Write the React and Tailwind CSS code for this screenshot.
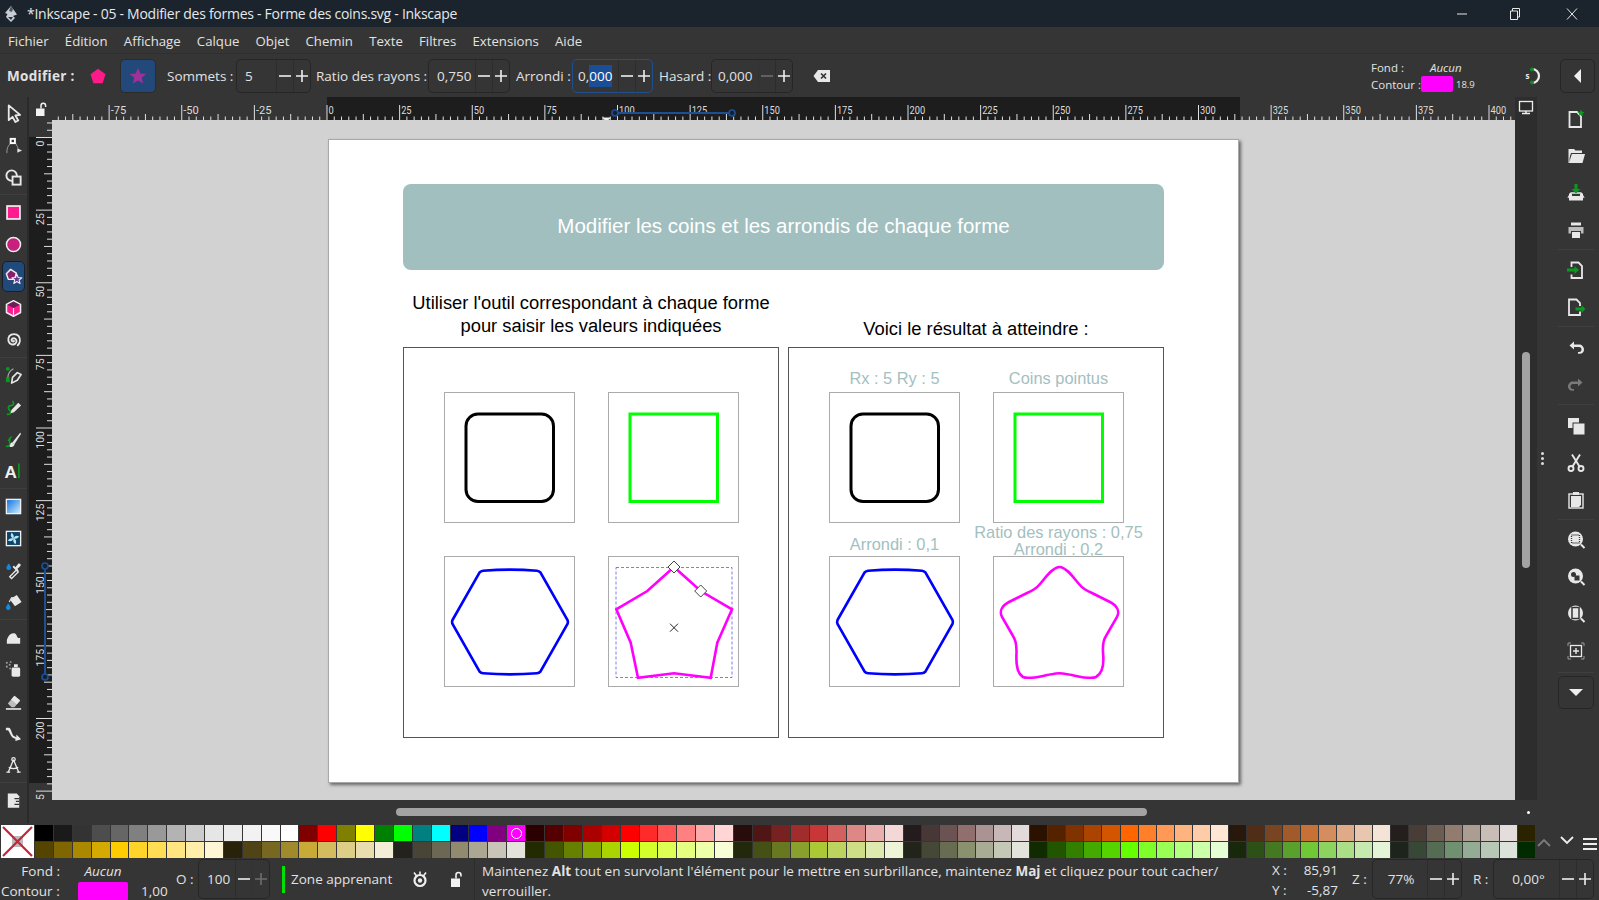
import React from "react";

const W = "#e8e8e8";
const G = "#0a9a20";

const Ic = ({ s = 20, children, className = "" }) => (
  <svg width={s} height={s} viewBox="0 0 20 20" className={className}>{children}</svg>
);

const leftIcons = {
  select: <path d="M5 1.500V17l4-3.500 3 5.500 3-1.600-3-5.300 5-.6Z" fill="#353535" stroke={W} strokeWidth="1.900" strokeLinejoin="round" />,
  node: <g><path d="M3 18C3 13 4 10 7 8" fill="none" stroke="#9a9a9a" strokeWidth="1" /><path d="M12 7L15 13" stroke="#9a9a9a" strokeWidth="1" /><rect x="6" y="2" width="6.500" height="6.500" fill="#fff" /><rect x="8" y="4" width="2.500" height="2.500" fill="#333" /><path d="M14 13l5 2.300-5 2.200Z" fill="#ddd" /></g>,
  shape: <g fill="none" stroke={W} strokeWidth="2"><circle cx="8" cy="8" r="5.500" /><rect x="9" y="9" width="8.500" height="8.500" fill="#353535" /></g>,
  rect: <rect x="3.200" y="3.200" width="13.600" height="13.600" fill="#ff1a90" stroke="#efefef" strokeWidth="1.800" />,
  circle: <circle cx="10" cy="10" r="7.400" fill="#c8207c" stroke="#efefef" strokeWidth="1.600" />,
  star: <g><path d="M7 2.500l6 4-2 6.500H4.500L2.500 7Z" fill="#8c1d6b" stroke="#efefef" strokeWidth="1.500" strokeLinejoin="round" /><path d="M13.500 7.500l1.500 3.500 3.800.3-2.900 2.400 1 3.600-3.400-2-3.200 2 .9-3.600-2.900-2.400 3.800-.3Z" fill="#6a3a95" stroke="#efefef" strokeWidth="1.100" strokeLinejoin="round" /></g>,
  box: <g strokeLinejoin="round"><path d="M10 1.800l7.400 4v8.400L10 18.200l-7.400-4V5.800Z" fill="#ff1a90" stroke="#efefef" strokeWidth="1.600" /><path d="M10 2.500l6.600 3.500L10 9.500 3.400 6Z" fill="#6b1f55" /><path d="M10 9.500v8" stroke="#efefef" strokeWidth="1.200" /></g>,
  spiral: <path d="M10.500 10.500a1.500 1.500 0 0 1-2.500-1.500c.8-2 4-2 5 .5 1 3-2 5.500-5 4.500-3.500-1-4.500-5.500-2.500-8.500 2.500-3 7.500-3 10 0 2 3 1.500 7-1 9.500" fill="none" stroke={W} strokeWidth="2" strokeLinecap="round" />,
  pen: <g><path d="M4 13C4 9 6 5 10 3" fill="none" stroke="#aaa" strokeWidth="1.200" /><circle cx="4" cy="3" r="2" fill={G} /><rect x="2" y="12" width="4" height="5" fill={G} /><path d="M8 18l1-6 5-5 4 2-4 6Z" fill="#353535" stroke={W} strokeWidth="1.700" strokeLinejoin="round" /></g>,
  pencil: <g><path d="M3 17c4 1 5-2 3-4s-2-5 1-5 4-2 2-5" fill="none" stroke={G} strokeWidth="1.800" /><path d="M7 16l.8-3.500L15 5l3 2.800-7.500 7.300Z" fill={W} /></g>,
  callig: <g><path d="M2 17c3 1 5-1 4-4s0-5 2-6" fill="none" stroke={G} strokeWidth="1.800" /><path d="M4 11l3-1" stroke={G} strokeWidth="1.600" /><path d="M9 13L17 3l1 1-7 11Z" fill={W} /><path d="M6 18c0-3 1.500-5 3-5l2 2c0 2-2 3-5 3Z" fill={W} /></g>,
  text: <g><text x="0.500" y="16.500" fontFamily="Liberation Sans" fontWeight="700" fontSize="18" fill="#f0f0f0">A</text><rect x="14.800" y="1.500" width="1.700" height="15.500" fill={G} /></g>,
  grad: <g><defs><linearGradient id="gr1" x1="0" y1="0" x2="1" y2="1"><stop offset="0" stopColor="#0a6fe0" /><stop offset="1" stopColor="#d4f0ff" /></linearGradient></defs><rect x="2.500" y="2.500" width="15" height="15" fill="url(#gr1)" stroke="#f0f0f0" strokeWidth="1.400" /></g>,
  mesh: <g><rect x="2.500" y="2.500" width="15" height="15" fill="#0f4468" stroke="#f0f0f0" strokeWidth="1.400" /><path d="M10 10C7 9 6.500 6.500 8 4c1.500 1 3 3 2 6ZM10 10c3 1 3.500 3.500 2 6-1.500-1-3-3-2-6ZM10 10c1-3 3.500-3.500 6-2-1 1.500-3 3-6 2ZM10 10c-1 3-3.500 3.500-6 2 1-1.500 3-3 6-2Z" fill="#b5e6f7" /></g>,
  dropper: <g><path d="M5 2.500c1.500 2 2.500 3.300 2.500 4.500a2.500 2.500 0 0 1-5 0C2.500 5.800 3.500 4.500 5 2.500Z" fill="#1289dd" /><path d="M8 18.500l-2-2 7-7 2 2Z" fill="none" stroke={W} strokeWidth="1.400" /><path d="M12 6.500l3-3.500c1.500-1 3.300 .8 2.300 2.300l-3.300 3 1.500 1.500-1.500 1.500-5-5 1.500-1.500Z" fill={W} /></g>,
  bucket: <g><path d="M4.500 11c1.500 2 2.500 3.300 2.500 4.500a2.500 2.500 0 0 1-5 0C2 14.300 3 13 4.500 11Z" fill="#1289dd" /><path d="M8 5.500L13.500 2l5 7.500-7 4.500L7 8Z" fill={W} /><path d="M5.500 9.500L8 5l6 1" fill="none" stroke={W} strokeWidth="1.200" /></g>,
  tweak: <path d="M3 16.500V13c1-5 5-9 9-7 1.500 1 1.500 4 3 4.500 1 .3 1.500 0 2-.5v6.500Z" fill={W} />,
  spray: <g><rect x="8" y="8" width="9" height="9.500" rx="1.500" fill={W} /><rect x="10.500" y="4.500" width="4" height="3" fill={W} /><g fill="#999"><circle cx="3" cy="3" r="1.100" /><circle cx="6" cy="5" r="1.100" /><circle cx="3" cy="7" r="1.100" /><circle cx="6.500" cy="9" r="1" /><circle cx="7" cy="2" r="1" /></g></g>,
  eraser: <g><path d="M4 12l7-8 6 5-6 7H8Z" fill="#bdbdbd" /><path d="M11 4l6 5-3.500 4-6-5Z" fill={W} /><rect x="2" y="17" width="16" height="1.700" fill={W} /></g>,
  conn: <path d="M2 4h3c3 0 3 8 6 9l2 1v-3l5 5-6 2v-2.500c-5-.5-6-8-8-9H2Z" fill={W} />,
  lpe: <g fill="none" stroke={W} strokeWidth="1.400"><path d="M10 4L4.500 17M10 4l5.500 13M5 12c3 1.500 7 1.500 10 0" /><circle cx="10" cy="3.500" r="1.800" /><path d="M2.500 17h4M13.500 17h4" /></g>,
  doc: <g><path d="M4 2.500h9.500l2.500 3v12H4Z" fill={W} /><path d="M16 8h-5M16 11h-3.500M16 14h-5" stroke="#353535" strokeWidth="1.300" /></g>,
};

const rightIcons = {
  new: <g><path d="M3.500 3H11l4 4.500V18H3.500Z" fill="#353535" stroke={W} strokeWidth="1.800" /><path d="M15 .5l1 2.300 2.500.2-1.900 1.700.6 2.400-2.200-1.300-2.200 1.300.6-2.400L11.500 3l2.500-.2Z" fill={G} /></g>,
  open: <g fill={W}><path d="M3 3h5l1.500 1.500H16V7H5L3 13Z" /><path d="M5.800 8H19l-2.500 9H3Z" /><path d="M3 3v14" stroke={W} /></g>,
  save: <g><path d="M3 10.500h3v2.500h8v-2.500h3V17.500H3Z" fill={W} /><path d="M5 10h10l2.500 4h-15Z" fill="none" stroke={W} strokeWidth="1.300" /><path d="M8.500 1h3V6H14.500l-4.500 4.500L5.500 6h3Z" fill={G} /></g>,
  print: <g fill={W}><path d="M5 2.500h10v3H5Z" /><path d="M2.500 7h15v6.500H15V11H5v2.500H2.500Z" fill="#bdbdbd" /><rect x="6" y="12" width="8" height="6" /></g>,
  imp: <g><path d="M5.500 7V2.500h7L16 6v12H5.500v-3.500" fill="none" stroke={W} strokeWidth="1.800" /><path d="M1 8.500h7.500V6l4.500 4-4.500 4v-2.500H1Z" fill={G} /></g>,
  exp: <g><path d="M14 9V6l-3.500-3.500H3V18H14v-3.500" fill="none" stroke={W} strokeWidth="1.800" /><path d="M9.500 10.500H15.500V8l4 4-4 4v-2.500h-6Z" fill={G} /></g>,
  undo: <path d="M8 4.500L3.500 8.500 8 12.500V10h5c2 0 2.500 1.500 2.500 2.500S15 15 13 15h-1v1.800h1.500c3 0 4.500-2 4.500-4.300S16 7.500 13.500 7.500H8Z" fill={W} />,
  redo: <path d="M12 4.500l4.500 4-4.500 4V10H7c-2 0-2.500 1.500-2.500 2.500S5 15 7 15h1v1.800H6.500c-3 0-4.500-2-4.500-4.300S4 7.500 6.500 7.500H12Z" fill="#7a7a7a" />,
  copy: <g fill={W}><rect x="2" y="2" width="11" height="10" /><rect x="6.500" y="6.500" width="11.500" height="11.500" fill="#353535" /><rect x="7.500" y="7.500" width="11" height="11" /></g>,
  cut: <g fill="none" stroke={W} strokeWidth="1.900"><circle cx="5" cy="15.500" r="2.500" /><circle cx="15" cy="15.500" r="2.500" /><path d="M6.500 13.500L14 1.500M13.500 13.500L6 1.500" /></g>,
  paste: <g><rect x="3" y="4" width="14" height="14" fill="none" stroke={W} strokeWidth="1.400" /><rect x="7" y="2" width="6" height="3" fill={W} /><path d="M5 6h10v9l-2 2H5Z" fill={W} /></g>,
  zsel: <g><circle cx="9.500" cy="9" r="7.500" fill={W} /><rect x="5.500" y="5" width="8" height="8" fill="none" stroke="#353535" strokeWidth="1.300" strokeDasharray="1 1" /><path d="M15 14.500l3.500 3.500" stroke={W} strokeWidth="2" /></g>,
  zdraw: <g><circle cx="9.500" cy="9" r="7.500" fill={W} /><circle cx="7.500" cy="7.500" r="2.500" fill="#353535" /><rect x="8.500" y="8.500" width="5" height="5" fill="#353535" /><path d="M15 14.500l3.500 3.500" stroke={W} strokeWidth="2" /></g>,
  zpage: <g><circle cx="9.500" cy="9" r="7.500" fill={W} /><rect x="6" y="3.500" width="7" height="11" fill={W} stroke="#353535" strokeWidth="1.500" /><path d="M15 14.500l3.500 3.500" stroke={W} strokeWidth="2" /></g>,
  center: <g><rect x="4.500" y="4.500" width="11" height="11" fill="none" stroke={W} strokeWidth="1.300" /><path d="M10 7v6M7 10h6" stroke={W} strokeWidth="1.400" /><path d="M2 5V2h3M15 2h3v3M18 15v3h-3M5 18H2v-3" fill="none" stroke="#999" strokeWidth="1" /></g>,
};

const LBtn = ({ name, active }) => (
  <div className="h-[32px] flex items-center justify-center">
    <div className={active ? "w-[23px] h-[31px] rounded-[5px] bg-[#21497a] border border-[#16202c] flex items-center justify-center" : "flex items-center justify-center"}>
      <Ic s={19}>{leftIcons[name]}</Ic>
    </div>
  </div>
);
const Sep = ({ className = "h-[3px]" }) => <div className={className + " flex items-center"}><div className="h-px w-full bg-[#3f3f3f]" /></div>;

const RBtn = ({ name }) => (
  <div className="h-[37px] flex items-center justify-center">
    <Ic s={20}>{rightIcons[name]}</Ic>
  </div>
);

const Spin = ({ value, w, dim, dimPlus, focus, tw = "text-left pl-2", sel, className = "" }) => (
  <div className={"flex h-[34px] shrink-0 rounded-[5px] border " + (focus ? "border-[#1f4f8f] " : "border-[#262626] ") + className} style={{ width: w }}>
    <div className="flex-1 flex items-center pt-[1px]">
      <span className={"w-full " + tw}>
        {sel ? <>0,<span className="bg-[#1a4f97] text-white py-[2px]">000</span></> : value}
      </span>
    </div>
    <div className={"w-[17px] flex items-center justify-center border-l border-[#2d2d2d] " + (dim ? "opacity-30" : "")}><svg width="14" height="14" viewBox="0 0 14 14"><path d="M1 7h12" stroke="#eee" strokeWidth="1.600" /></svg></div>
    <div className={"w-[17px] flex items-center justify-center border-l border-[#2d2d2d] " + (dimPlus ? "opacity-30" : "")}><svg width="14" height="14" viewBox="0 0 14 14"><path d="M1 7h12M7 1v12" stroke="#eee" strokeWidth="1.600" /></svg></div>
  </div>
);

function HRuler() {
  const items = [];
  const x0 = 274;
  for (let i = -38; i <= 165; i++) {
    const u = i * 2.5;
    const x = x0 + u * 2.905;
    if (x < 0 || x > 1462) continue;
    const major = i % 10 === 0;
    const med = i % 5 === 0;
    items.push(<line key={i} x1={x} x2={x} y1={major ? 8 : med ? 17 : 19.500} y2={23} stroke="#e0e0e0" strokeWidth="1" />);
    if (major) items.push(<text key={"t" + i} x={x + 1.500} y={16.500} fontSize="10.500" fill="#dcdcdc" fontFamily="Roboto" textLength={String(u).length * 5.200} lengthAdjust="spacingAndGlyphs">{u}</text>);
  }
  return (
    <svg width="1462" height="23" className="block">
      <rect x="0" y="0" width="1462" height="23" fill="#353535" />
      <rect x="274" y="0" width="913" height="23" fill="#1d1d1d" />
      {items}
      <path d="M549 20.500h9l-4.500 4.500Z" fill="#eee" />
      <path d="M562 16H679" stroke="#1d4f93" strokeWidth="2" />
      <circle cx="562" cy="16" r="3" fill="#16202c" stroke="#1d4f93" strokeWidth="1.700" />
      <circle cx="679" cy="16" r="3" fill="#16202c" stroke="#1d4f93" strokeWidth="1.700" />
    </svg>
  );
}

function VRuler() {
  const items = [];
  const y0 = 17.500;
  for (let i = -6; i <= 90; i++) {
    const u = i * 2.5;
    const y = y0 + u * 2.905;
    if (y < 0 || y > 680) continue;
    const major = i % 10 === 0;
    const med = i % 5 === 0;
    items.push(<line key={i} y1={y} y2={y} x1={major ? 7 : med ? 15 : 18} x2={23} stroke="#e0e0e0" strokeWidth="1" />);
    if (major) items.push(<text key={"t" + i} transform={`translate(15 ${y + 3}) rotate(-90)`} textAnchor="end" fontSize="10.500" fill="#dcdcdc" fontFamily="Roboto">{u}</text>);
  }
  return (
    <svg width="23" height="680" className="block shrink-0">
      <rect width="23" height="680" fill="#353535" />
      <rect y="17" width="23" height="646" fill="#1d1d1d" />
      {items}
      <path d="M16 446V557" stroke="#1d4f93" strokeWidth="2" />
      <circle cx="16" cy="446" r="3" fill="#16202c" stroke="#1d4f93" strokeWidth="1.700" />
      <circle cx="16" cy="557" r="3" fill="#16202c" stroke="#1d4f93" strokeWidth="1.700" />
    </svg>
  );
}

const Square = ({ children, label }) => (
  <div className="relative w-[131px] h-[131px] border border-[#ababab]">
    {label}
    <svg width="130" height="130" viewBox="0 0 130 130" className="block absolute left-0 top-0 overflow-visible">{children}</svg>
  </div>
);

const RR = <rect x="21" y="21" width="87.500" height="87.500" rx="12" fill="none" stroke="#000" strokeWidth="3" />;
const GR = <rect x="21" y="21" width="87.500" height="87.500" fill="none" stroke="#00ff00" strokeWidth="3" />;
const HX = <path d="M7.500 63L34.500 15.500Q36 14 38 13.800Q65 11.500 92 13.800Q94 14 95.500 15.500L122.500 63Q123.300 65 122.500 67L95.500 114.500Q94 116 92 116.200Q65 118.500 38 116.200Q36 116 34.500 114.500L7.500 67Q6.700 65 7.500 63Z" fill="none" stroke="#0000ff" strokeWidth="2.600" />;
const PT = (
  <g>
    <rect x="7" y="10.500" width="116" height="110" fill="none" stroke="#5a5ae6" strokeWidth="0.800" strokeDasharray="3 2" />
    <path d="M65 10L91.700 34L123 52.300L108.300 85.700L101.700 120.700L65 116.300L29 120.700L21.700 85.700L7.300 52.300L38.300 34Z" fill="none" stroke="#ff00ff" strokeWidth="2.600" />
    <path d="M65 4l6 6-6 6-6-6Z" fill="#fff" stroke="#444" strokeWidth="1" />
    <path d="M91.700 28l6 6-6 6-6-6Z" fill="#fff" stroke="#444" strokeWidth="1" />
    <path d="M61 66.700l8 8M69 66.700l-8 8" stroke="#222" strokeWidth="1" />
  </g>
);
const ST = <path d="M65.500 10C72 10 79 20 85 27C89 32 93 34 98 36L116 45C124 49 125.500 55 123 60L112 79C108 85 109 90 109 96C110 105 109 116 102 120C96 123 82 118.500 72 117C67 116 63 116 59 117C49 118.500 35 123 29 120C22 116 22 105 22.500 96C22.500 90 23 85 19 79L8 60C5.500 55 7 49 15 45L33 36C38 34 42 32 46 27C52 20 59 10 65.500 10Z" fill="none" stroke="#ff00ff" strokeWidth="2.600" />;

const Lbl = ({ children, className }) => (
  <div className={"absolute left-[-30px] right-[-30px] text-center text-[16.400px] leading-[16.500px] text-[#a3c0c0] " + className}>{children}</div>
);

const top = ["#000000","#1a1a1a","#333333","#4d4d4d","#666666","#808080","#999999","#b3b3b3","#cccccc","#e6e6e6","#ececec","#f2f2f2","#f9f9f9","#ffffff","#800000","#ff0000","#808000","#ffff00","#008000","#00ff00","#008080","#00ffff","#000080","#0000ff","#800080","#ff00ff","#2b0000","#550000","#800000","#aa0000","#d40000","#ff0000","#ff2a2a","#ff5555","#ff8080","#ffaaaa","#ffd5d5","#280b0b","#501616","#782121","#a02c2c","#c83737","#d35f5f","#de8787","#e9afaf","#f4d7d7","#241c1c","#483737","#6c5353","#916f6f","#ac9393","#c8b7b7","#e3dbdb","#2b1100","#552200","#803300","#aa4400","#d45500","#ff6600","#ff7f2a","#ff9955","#ffb380","#ffccaa","#ffe6d5","#28170b","#502d16","#784421","#a05a2c","#c87137","#d38d5f","#deaa87","#e9c6af","#f4e3d7","#241f1c","#483e37","#6c5d53","#917c6f","#ac9d93","#c8beb7","#e3dedb","#2b2200"];
const bot = ["#554400","#806600","#aa8800","#d4aa00","#ffcc00","#ffd42a","#ffdd55","#ffe680","#ffeeaa","#fff6d5","#28220b","#504416","#786721","#a08a2c","#c8ab37","#d3bc5f","#decd87","#e9ddaf","#f4eed7","#24221c","#484537","#6c6753","#918a6f","#aca793","#c8c4b7","#e3e2db","#222b00","#445500","#668000","#88aa00","#aad400","#ccff00","#d4ff2a","#ddff55","#e5ff80","#eeffaa","#f6ffd5","#22280b","#445016","#677821","#89a02c","#abc837","#bcd35f","#cdde87","#dde9af","#eef4d7","#22241c","#454837","#676c53","#8a916f","#a7ac93","#c4c8b7","#e2e3db","#112b00","#225500","#338000","#44aa00","#55d400","#66ff00","#7fff2a","#99ff55","#b3ff80","#ccffaa","#e5ffd5","#17280b","#2d5016","#447821","#5aa02c","#71c837","#8dd35f","#aade87","#c6e9af","#e3f4d7","#1c241c","#374837","#536c53","#6f916f","#93ac93","#b7c8b7","#dbe3db","#002b00"];

const Row = ({ colors, mark }) => (
  <div className="flex h-[17px]">
    {colors.map((c, i) => (
      <div key={i} className="h-full shrink-0 pr-px pb-px" style={{ width: i < 46 ? 18.900 : 18.060 }}>
        <div className="w-full h-full flex items-center justify-center" style={{ backgroundColor: c }}>
          {mark && i === 25 ? <div className="w-[11px] h-[11px] rounded-full border border-white" /> : null}
        </div>
      </div>
    ))}
  </div>
);

export default function App() {
  return (
    <div className="w-[1599px] h-[900px] overflow-hidden flex flex-col bg-[#353535] text-[#e2e2e2] text-[13.500px] font-['Open_Sans',sans-serif]">
      {/* title */}
      <div className="h-[27px] shrink-0 bg-[#1b232c] flex items-center relative">
        <svg width="16" height="18" viewBox="0 0 16 18" className="ml-[3px]">
          <path d="M8 1L2 8l2.500 1L3 12l5 5 4-4-2-2 4-1.500Z" fill="#c9ced4" />
          <path d="M8 1l-2 5 3 1 1-3Z" fill="#4a5560" />
          <path d="M5 12h5l-2 3Z" fill="#2a3540" />
        </svg>
        <span className="ml-[8px] text-[14px] text-[#e6e8ea] whitespace-nowrap tracking-[-0.27px]">*Inkscape - 05 - Modifier des formes - Forme des coins.svg - Inkscape</span>
        <div className="ml-auto flex items-center pr-[21px]">
          <svg width="12" height="12" viewBox="0 0 12 12"><path d="M1 6h10" stroke="#e8e8e8" strokeWidth="1" /></svg>
          <svg width="12" height="14" viewBox="0 0 12 14" className="ml-[41px]"><path d="M1.500 4h7v8.500h-7ZM3.500 4V1.500h7v8.500H8.500" fill="none" stroke="#e8e8e8" strokeWidth="1" /></svg>
          <svg width="12" height="12" viewBox="0 0 12 12" className="ml-[45px]"><path d="M1 .5l10 11M11 .5l-10 11" stroke="#e8e8e8" strokeWidth="1" /></svg>
        </div>
      </div>
      {/* menu */}
      <div className="h-[27px] shrink-0 flex items-center pl-[8px] pt-[3px] gap-[16.200px] text-[13.200px] border-b border-[#2f2f2f]">
        {["Fichier","Édition","Affichage","Calque","Objet","Chemin","Texte","Filtres","Extensions","Aide"].map((m) => <span key={m}>{m}</span>)}
      </div>
      {/* toolbar */}
      <div className="h-[43px] shrink-0 flex items-center relative">
        <span className="ml-[7px] w-[75px] pt-[2px] font-bold text-[13.500px] tracking-[0.3px]">Modifier :</span>
        <svg width="16" height="16" viewBox="0 0 16 16" className="ml-[8px]"><path d="M8 .8l7.500 5.500-2.900 8.900H3.400L.5 6.300Z" fill="#ff1a8a" /></svg>
        <div className="ml-[14px] w-[36px] h-[34px] rounded-[5px] bg-[#23497a] border border-[#2b2b2b] flex items-center justify-center">
          <svg width="18" height="18" viewBox="0 0 18 18"><path d="M9 1l2.300 5.400 5.900.5-4.500 3.900 1.400 5.800L9 13.500l-5.100 3.100 1.400-5.800L.8 6.900l5.900-.5Z" fill="#a0309a" /></svg>
        </div>
        <span className="ml-[11px] w-[69px] pt-[2px] whitespace-nowrap">Sommets :</span>
        <Spin value="5" w={75} />
        <span className="ml-[5px] w-[112px] pt-[2px] whitespace-nowrap">Ratio des rayons :</span>
        <Spin value="0,750" w={82} tw="pl-[8px]" />
        <span className="ml-[6px] w-[56px] pt-[2px] whitespace-nowrap">Arrondi :</span>
        <Spin sel w={81} focus tw="pl-[5px]" />
        <span className="ml-[6px] w-[52px] pt-[2px] whitespace-nowrap">Hasard :</span>
        <Spin value="0,000" w={82} dim tw="pl-[6px]" />
        <svg width="18" height="14" viewBox="0 0 18 14" className="ml-[20px]"><path d="M5 1h12v12H5L.5 7Z" fill="#e8e8e8" /><path d="M8 4.500l5 5M13 4.500l-5 5" stroke="#333" strokeWidth="1.700" /></svg>
        <div className="ml-auto flex items-center">
          <div className="w-[122px] flex flex-col text-[11.500px] leading-[17px]">
            <div className="flex"><span className="w-[59px]">Fond :</span><span className="italic">Aucun</span></div>
            <div className="flex items-center">
              <span className="w-[50px] shrink-0 whitespace-nowrap">Contour :</span>
              <span className="w-[32px] shrink-0 h-[16px] rounded-[2px] bg-[#ff00ff]" />
              <span className="ml-[3px] text-[9.500px]">18.9</span>
            </div>
          </div>
          <svg width="18" height="18" viewBox="0 0 18 18" className="ml-[30px]">
            <path d="M9 2a7 7 0 0 1 0 14" fill="none" stroke="#eee" strokeWidth="2.200" />
            <circle cx="9" cy="2.500" r="2" fill="#128a22" />
            <circle cx="9" cy="15.500" r="2" fill="#128a22" />
            <text x="2.500" y="11.500" fontSize="8" fontWeight="700" fill="#eee" fontFamily="Open Sans">s</text>
          </svg>
          <div className="ml-[19px] mr-[4px] w-[35px] h-[34px] rounded-[5px] border border-[#262626] flex items-center justify-center">
            <svg width="8" height="14" viewBox="0 0 8 14"><path d="M7 0v14L0 7Z" fill="#f0f0f0" /></svg>
          </div>
        </div>
      </div>

      {/* body */}
      <div className="h-[728px] shrink-0 flex">
        <div className="w-[27px] shrink-0 h-[726px] flex flex-col">
          <LBtn name="select" /><LBtn name="node" /><LBtn name="shape" /><Sep />
          <LBtn name="rect" /><LBtn name="circle" /><LBtn name="star" active /><LBtn name="box" /><LBtn name="spiral" /><Sep />
          <LBtn name="pen" /><LBtn name="pencil" /><LBtn name="callig" /><LBtn name="text" /><Sep />
          <LBtn name="grad" /><LBtn name="mesh" /><LBtn name="dropper" /><LBtn name="bucket" /><Sep />
          <LBtn name="tweak" /><LBtn name="spray" /><LBtn name="eraser" /><LBtn name="conn" /><LBtn name="lpe" /><Sep />
          <LBtn name="doc" />
        </div>
        <div className="w-[2px] h-[726px] shrink-0 bg-[#2a2a2a]" />
        <div className="w-[1508px] shrink-0 flex flex-col">
          {/* ruler row */}
          <div className="h-[23px] flex">
            <div className="w-[24px] shrink-0 flex items-center justify-center">
              <svg width="14" height="14" viewBox="0 0 14 14"><path d="M2 6.500h8.500V14H2Z" fill="#f2f2f2" /><path d="M7 6.500V3.500a2.300 2.300 0 0 1 4.600 0V5" fill="none" stroke="#f2f2f2" strokeWidth="1.500" /></svg>
            </div>
            <HRuler />
            <div className="w-[22px] bg-[#2d2d2d] flex items-start justify-center pt-[3px]">
              <svg width="16" height="16" viewBox="0 0 16 16"><rect x="1.500" y="1.500" width="13" height="9.500" fill="none" stroke="#eee" strokeWidth="1.300" /><path d="M4 13.500h8M8 11v2.500" stroke="#eee" strokeWidth="1.500" /></svg>
            </div>
          </div>
          {/* canvas row */}
          <div className="h-[680px] flex">
            <VRuler />
            <div className="w-[1463px] h-full bg-[#d2d2d2] pl-[276px] pt-[19px] overflow-hidden">
              <div className="w-[911px] h-[644px] bg-white shadow-[2px_2px_3px_rgba(0,0,0,0.5)] border border-[#a8a8a8] pl-[74px] pt-[44px] font-['Liberation_Sans',sans-serif] text-black">
                <div className="w-[761px] h-[86px] pb-[2px] rounded-[8px] bg-[#a1bfbf] flex items-center justify-center text-white text-[20.500px]">Modifier les coins et les arrondis de chaque forme</div>
                <div className="flex gap-[9px] w-[761px]">
                  <div className="w-[376px]">
                    <div className="h-[77px] flex flex-col items-center justify-end pb-[10px] text-[18.350px] leading-[23px] text-center">
                      <div>Utiliser l'outil correspondant à chaque forme</div>
                      <div>pour saisir les valeurs indiquées</div>
                    </div>
                    <div className="h-[391px] border border-[#555] grid grid-cols-[131px_131px] grid-rows-[131px_131px] gap-x-[33px] gap-y-[33px] pl-[40px] pt-[44px]">
                      <Square>{RR}</Square>
                      <Square>{GR}</Square>
                      <Square>{HX}</Square>
                      <Square>{PT}</Square>
                    </div>
                  </div>
                  <div className="w-[376px]">
                    <div className="h-[77px] flex flex-col items-center justify-end pb-[7px] text-[18.350px] leading-[23px] text-center">
                      <div>Voici le résultat à atteindre :</div>
                    </div>
                    <div className="h-[391px] border border-[#555] grid grid-cols-[131px_131px] grid-rows-[131px_131px] gap-x-[33px] gap-y-[33px] pl-[40px] pt-[44px]">
                      <Square label={<Lbl className="top-[-23px]">Rx : 5 Ry : 5</Lbl>}>{RR}</Square>
                      <Square label={<Lbl className="top-[-23px]">Coins pointus</Lbl>}>{GR}</Square>
                      <Square label={<Lbl className="top-[-21px]">Arrondi : 0,1</Lbl>}>{HX}</Square>
                      <Square label={<Lbl className="top-[-33px]">Ratio des rayons : 0,75<br />Arrondi : 0,2</Lbl>}>{ST}</Square>
                    </div>
                  </div>
                </div>
              </div>
            </div>
            <div className="w-[22px] shrink-0 bg-[#2d2d2d] flex flex-col items-center pt-[232px]">
              <div className="w-[8px] h-[216px] rounded-full bg-[#a3a3a3]" />
            </div>
          </div>
          {/* hscroll */}
          <div className="h-[25px] flex pt-[8px] pl-[367px]">
            <div className="w-[751px] h-[8px] rounded-full bg-[#a3a3a3]" />
            <div className="ml-[380px] w-[3px] h-[3px] mt-[3px] rounded-full bg-white" />
          </div>
        </div>
        <div className="w-[62px] shrink-0 flex flex-col items-stretch px-[5px] pt-[3px] relative">
          <div className="absolute left-[4px] top-[355px] flex flex-col gap-[2px]">
            <div className="w-[3px] h-[3px] rounded-full bg-[#ddd]" /><div className="w-[3px] h-[3px] rounded-full bg-[#ddd]" /><div className="w-[3px] h-[3px] rounded-full bg-[#ddd]" />
          </div>
          <div className="pl-[16px] flex flex-col">
            <RBtn name="new" /><RBtn name="open" /><RBtn name="save" /><RBtn name="print" /><Sep className="h-[3px]" />
            <RBtn name="imp" /><RBtn name="exp" /><Sep className="h-[3.500px]" />
            <RBtn name="undo" /><RBtn name="redo" /><Sep className="h-[4.500px]" />
            <RBtn name="copy" /><RBtn name="cut" /><RBtn name="paste" /><Sep className="h-[3.500px]" />
            <RBtn name="zsel" /><RBtn name="zdraw" /><RBtn name="zpage" /><RBtn name="center" /><Sep className="h-[6.500px]" />
            <div className="h-[33px] rounded-[5px] border border-[#262626] flex items-center justify-center">
              <svg width="14" height="8" viewBox="0 0 14 8"><path d="M0 0h14L7 7Z" fill="#f0f0f0" /></svg>
            </div>
          </div>
        </div>
      </div>

      {/* palette */}
      <div className="h-[33px] shrink-0 flex items-start relative">
        <div className="ml-[1px] w-[33px] h-[33px] bg-white relative">
          <svg width="33" height="33" viewBox="0 0 33 33" className="block">
            <rect x="11" y="11" width="11" height="11" fill="#bbb" />
            <path d="M2 2l29 29M31 2L2 31" stroke="#c3263a" strokeWidth="2.200" />
          </svg>
        </div>
        <div className="ml-[1px] flex flex-col">
          <Row colors={top} mark />
          <Row colors={bot} />
        </div>
        <div className="flex items-center ml-[1px] pt-[9px] gap-[9px]">
          <svg width="14" height="9" viewBox="0 0 14 9"><path d="M1 8l6-6 6 6" fill="none" stroke="#7c7c7c" strokeWidth="1.800" /></svg>
          <svg width="14" height="9" viewBox="0 0 14 9" className="-mt-[4px]"><path d="M1 1l6 6 6-6" fill="none" stroke="#eee" strokeWidth="1.800" /></svg>
          <svg width="14" height="12" viewBox="0 0 14 12" className="mt-[4px]"><path d="M0 1h14M0 6h14M0 11h14" stroke="#eee" strokeWidth="2" /></svg>
        </div>
      </div>

      {/* status */}
      <div className="h-[42px] shrink-0 flex items-center relative">
        <div className="w-[174px] h-full pt-[3px] grid grid-cols-[78px_50px_46px] grid-rows-[20px_20px] items-center">
          <span className="text-right pr-[18px]">Fond :</span>
          <span className="italic text-center">Aucun</span>
          <span />
          <span className="pl-[1px] whitespace-nowrap">Contour :</span>
          <span className="h-[19px] rounded-[2px] bg-[#ff00ff]" />
          <span className="pl-[13px]">1,00</span>
        </div>
        <span className="ml-[2px] w-[22px] pt-[1px]">O :</span>
        <Spin value="100" w={72} tw="pl-[8px]" dimPlus className="!h-[40px]" />
        <div className="ml-[12px] w-[3px] h-[27px] bg-[#00e000]" />
        <span className="ml-[6px] w-[100px] pt-[1px] whitespace-nowrap">Zone apprenant</span>
        <svg width="18" height="18" viewBox="0 0 18 18" className="ml-[20px]"><circle cx="9" cy="10.500" r="5.500" fill="none" stroke="#eee" strokeWidth="2.200" /><circle cx="9" cy="10.500" r="2.200" fill="#eee" /><path d="M3 2.500l3 4M15 2.500l-3 4M9 1.500v3" stroke="#eee" strokeWidth="1.600" /></svg>
        <svg width="14" height="16" viewBox="0 0 14 16" className="ml-[21px]"><path d="M1 7.500h9V16H1Z" fill="#f2f2f2" /><path d="M6 7.500V4a2.500 2.500 0 0 1 5 0v1.500" fill="none" stroke="#f2f2f2" strokeWidth="1.600" /></svg>
        <div className="ml-[10px] pl-[7px] w-[790px] h-full pt-[3px] border-l border-[#2d2d2d] leading-[20px] tracking-[0.04px]">
          <div>Maintenez <b>Alt</b> tout en survolant l'élément pour le mettre en surbrillance, maintenez <b>Maj</b> et cliquez pour tout cacher/ verrouiller.</div>
        </div>
        <div className="absolute left-[1272px] top-[2px] w-[66px] h-[40px] grid grid-rows-[20px_20px] grid-cols-[auto_1fr] items-center">
          <span>X :</span><span className="text-right">85,91</span>
          <span>Y :</span><span className="text-right">-5,87</span>
        </div>
        <div className="absolute left-[1352px] top-[1px] flex items-center">
          <span className="w-[20px]">Z :</span>
          <Spin value="77%" w={90} tw="text-center pl-[2px]" className="!h-[40px]" />
          <span className="ml-[11px] w-[20px]">R :</span>
          <Spin value="0,00°" w={101} tw="text-center pl-[4px]" className="!h-[40px]" />
        </div>
      </div>
    </div>
  );
}
